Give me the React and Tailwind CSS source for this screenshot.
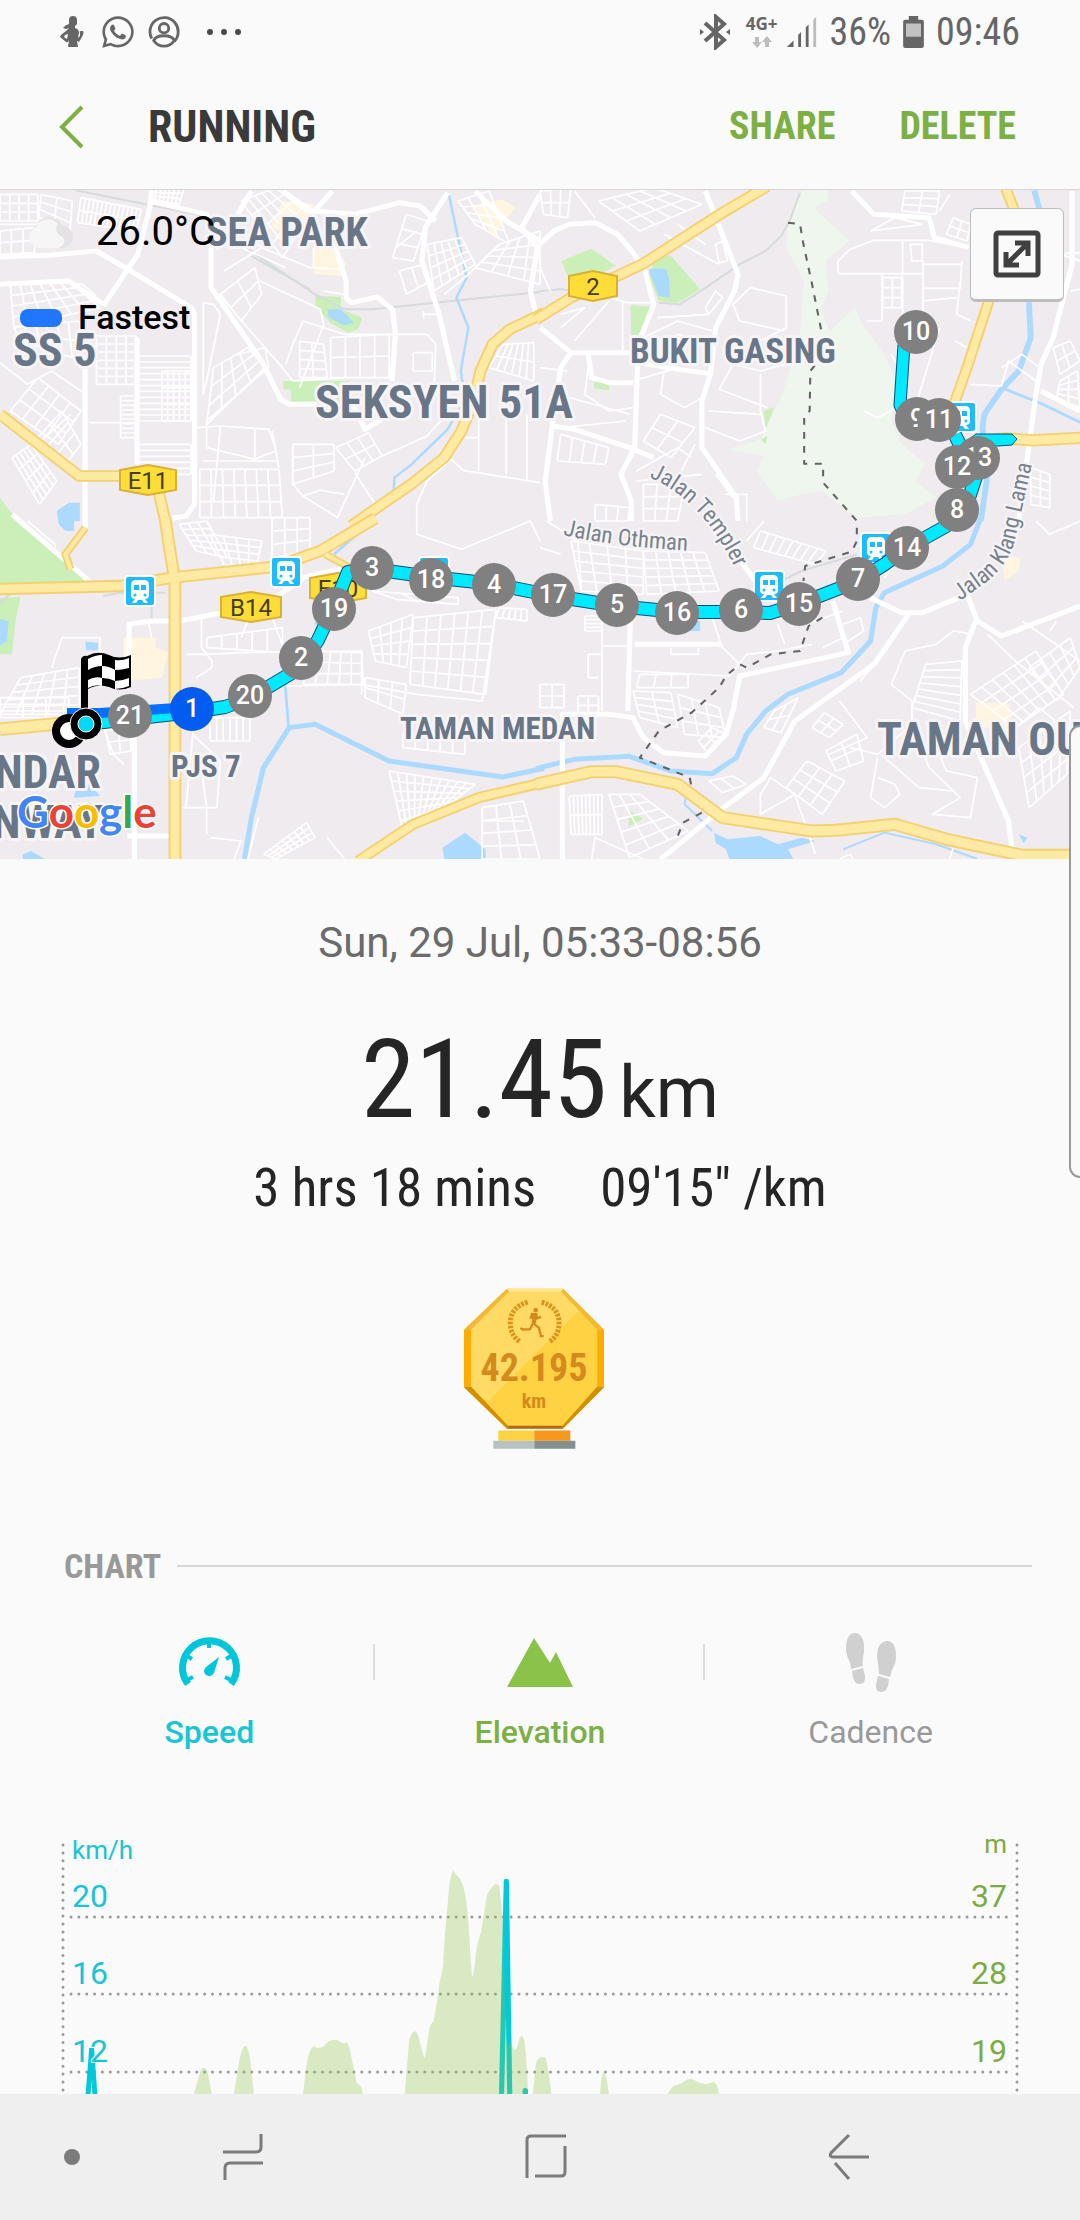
import React, { useState } from "react";
import { FaWhatsapp } from "react-icons/fa";

const condensed = "font-['Roboto_Condensed','Liberation_Sans_Narrow',Roboto,sans-serif]";

// Each tile is drawn in its own unit space and placed on the map canvas
const TILES = [
  {
    at: "translate(0 -9) scale(.3444 .3333)",
    commercial: [
      "M820 60L912 70L900 110L860 160L785 140Z",
      "M912 190L975 195L1005 250L990 285L912 278Z",
      "M1365 75L1460 55L1495 80L1435 165Z",
    ],
    parks: [
      "M916 344L990 348V385L1052 410L1040 445L1010 455L960 425L916 375Z",
      "M822 600H1015V662H845V625H822Z",
      "M0 950L50 1020H0Z",
    ],
    forest: [],
    lakes: ["M950 385H990L1028 425L1000 433L955 410Z", "M165 990L200 965H232V1020H170Z"],
    rivers: [
      ["M1303 40L1355 290L1325 350L1360 440L1338 570L1345 620M1335 680L1300 745L1195 850L1145 890L1143 935", 7],
    ],
    rail: ["M220 28L595 105L735 215L915 340L1000 385H1080L1568 333", "M730 225L900 325"],
    blocks: [
      [0, 40, 110, 40, 110, 120, 0, 120, 4, 3],
      [120, 40, 210, 60, 200, 190, 110, 130, 2, 4],
      [235, 50, 410, 85, 395, 150, 225, 125, 14, 2],
      [0, 150, 100, 140, 100, 215, 0, 220, 3, 2],
      [440, 20, 535, 20, 520, 70, 440, 55, 7, 3],
      [30, 310, 200, 300, 290, 380, 40, 440, 6, 4],
      [40, 440, 230, 420, 240, 540, 60, 480, 6, 2],
      [280, 465, 395, 465, 395, 610, 280, 610, 4, 6],
      [400, 525, 555, 525, 555, 720, 400, 720, 1, 11],
      [470, 570, 555, 570, 555, 720, 470, 720, 5, 3],
      [350, 645, 395, 645, 395, 770, 350, 770, 1, 9],
      [400, 790, 555, 790, 555, 880, 400, 880, 1, 5],
      [580, 865, 810, 865, 820, 1010, 580, 1010, 7, 3],
      [30, 690, 110, 590, 235, 690, 170, 790, 3, 4],
      [35, 830, 90, 790, 165, 900, 115, 970, 5, 4],
      [110, 770, 180, 690, 235, 790, 190, 850, 2, 3],
      [850, 790, 970, 790, 970, 870, 850, 910, 2, 3],
      [975, 800, 1070, 755, 1110, 825, 1030, 870, 3, 2],
      [870, 480, 940, 490, 950, 590, 870, 590, 2, 4],
      [960, 470, 1130, 460, 1130, 590, 960, 590, 4, 2],
      [1200, 515, 1255, 515, 1255, 570, 1200, 570, 1, 1],
      [1240, 190, 1340, 170, 1380, 250, 1260, 330, 5, 4],
      [1380, 260, 1450, 190, 1568, 150, 1568, 310, 4, 4],
      [1420, 560, 1460, 490, 1550, 485, 1550, 600, 2, 6],
      [620, 560, 720, 500, 770, 560, 600, 730, 4, 3],
      [640, 340, 740, 260, 760, 340, 700, 420, 2, 2],
      [700, 60, 800, 20, 900, 100, 820, 230, 5, 4],
      [1180, 100, 1240, 120, 1200, 240, 1140, 230, 1, 3],
      [1180, 340, 1250, 300, 1230, 250, 1160, 270, 2, 1],
      [1330, 60, 1420, 30, 1480, 190, 1380, 130, 3, 4],
    ],
    minor: [
      "M590 365L620 370L640 400L600 600L590 640Z M690 520L770 500L780 560L600 720V800L740 835",
      "M635 340L820 560L850 600L1000 590M755 300L930 385L940 430L870 620",
      "M570 740L640 735L780 745L800 800V810L740 835M640 735L620 960M790 750L810 860",
      "M830 550L850 490L880 420L1000 460H1240L1265 490L1260 640L1140 650",
      "M850 800V910L880 945L980 1010L1060 830M880 945L930 928L1000 940M1030 875L1090 970M1110 825L1240 765L1270 730L1300 700",
      "M1210 1020V970L1240 900L1310 835L1345 868L1568 905M1390 640V870M1470 680V880M1530 700V900M1350 770H1390",
      "M0 545L80 610L150 570L250 640M260 725H400M205 700L120 780M0 130H110M150 300L240 310L280 345",
      "M620 100L760 200L900 260L1000 265M700 200L830 260M650 270L760 200M910 200V260M940 330L1000 340",
      "M1150 200L1210 150M1290 340L1360 280L1450 190M1230 400H1270M1230 390V415M590 840H810M740 740V840",
    ],
    major: [
      "M0 228L150 222L280 210L330 240L380 270L555 380L565 400V970L540 1005L500 1012",
      "M440 30L435 80L400 220L370 265L300 375M435 60L600 100L620 140",
      "M613 190V320L760 540L815 655L840 670H920",
      "M247 555V1020M398 470V850",
      "M1300 35L1235 140L1225 240L1275 400L1320 600",
      "M970 190L1005 300V350L1020 365L1095 348L1140 385L1148 460L1138 600",
      "M730 30L640 190M820 30L905 90L1030 100L1160 65L1220 75L1265 120M905 100L965 30",
      "M1380 30L1470 120L1568 180M1568 40L1515 140L1560 200L1540 330L1555 395",
      "M1000 620L1060 745L1130 700M0 310L200 300L300 370",
    ],
    highways: [
      ["M1580 396L1480 445L1430 490L1395 570L1375 660L1340 750L1290 830L1200 905L1020 1034", 24],
      ["M0 700L230 885H360M460 930L480 1020", 24],
    ],
    borders: [],
  },
  {
    at: "translate(540 -9) scale(.3444 .3333)",
    commercial: [],
    parks: [
      "M62 240L150 203L220 255L150 290L80 285Z",
      "M335 235L378 222L465 325L400 365L345 360L315 280Z",
      "M263 372L322 378L280 475L265 470Z",
      "M157 602L203 605L200 628L157 622Z",
      "M650 690L680 678L655 745Z",
      "M640 775L662 765L655 790Z",
    ],
    forest: [
      "M760 28H835V60L795 80L898 180L830 240L837 330L815 380L840 450L915 380L935 430L1000 520L1030 590V640L1020 720L1050 790L1120 850L1090 900L1150 950L1060 1000L920 1010L820 930L760 940L690 960L630 870L650 825L545 805L640 775L700 650L755 470L765 300L715 200L720 120L750 60Z",
    ],
    lakes: ["M315 265L365 262L375 290L378 350L345 345Z"],
    rivers: [
      ["M1435 28L1450 85L1440 230L1420 370L1425 470L1390 570L1340 625L1290 700L1285 740L1297 900L1280 1020", 17],
      ["M1340 620L1460 670L1580 730", 8],
    ],
    rail: ["M755 35L725 120L700 165L655 210L580 250L460 335L405 370L345 365M0 330L60 325L100 330"],
    blocks: [
      [0, 30, 90, 20, 80, 110, 10, 100, 3, 2],
      [170, 60, 330, 20, 470, 70, 290, 150, 4, 3],
      [995, 290, 1050, 290, 1050, 380, 995, 380, 2, 3],
      [1060, 30, 1160, 30, 1150, 100, 1050, 90, 2, 3],
      [1180, 160, 1200, 110, 1250, 130, 1240, 180, 2, 2],
      [1510, 600, 1560, 570, 1568, 680, 1500, 650, 2, 4],
      [1425, 860, 1480, 880, 1480, 980, 1425, 970, 2, 4],
      [60, 760, 200, 800, 190, 850, 50, 840, 4, 1],
      [300, 780, 350, 700, 450, 740, 380, 830, 2, 2],
      [160, 970, 260, 980, 255, 1020, 160, 1020, 3, 1],
      [300, 910, 420, 910, 400, 1020, 300, 1020, 3, 3],
      [1490, 500, 1540, 480, 1568, 540, 1510, 580, 2, 2],
    ],
    minor: [
      "M865 275V240L900 205L970 178H1130L1240 200M865 278H1110M1053 180V440M1112 240V420M993 280V420H950M1075 190H1110V240H1080Z",
      "M1110 322H1220L1225 240M1110 250H1225M1095 660L1160 440M1110 360L1210 350M1220 300L1210 400L1250 420M1205 480L1240 500",
      "M610 320L715 345V440L640 480M610 320L560 370L580 420L710 450M480 380L510 330L530 350L490 400Z",
      "M520 625L560 550L640 570L750 540M520 625L660 680M640 580V690L655 750L580 780L480 740M490 690L640 700",
      "M940 690L980 710L1045 675M1020 520L1060 590M1250 610L1340 615L1360 540L1440 600",
      "M180 340L250 365H330M60 440L130 380L60 400M200 360L100 480M240 360V520",
      "M140 560L130 640L200 690L270 680M50 640L260 700M60 740L250 720M270 600L400 560M360 570L350 640L420 680L470 650",
      "M360 160L520 250M400 130L480 190M510 190L530 180L545 240L520 245ZM340 410L490 400M300 470L400 420L500 450M350 500L400 460L480 480",
      "M280 870L400 800L440 830M280 900L470 880M540 940L600 940V1020M510 880L560 950M410 870L450 790",
      "M960 150L1030 110L1110 130L960 150M1160 90L1190 40M1340 560L1400 520L1450 560",
      "M0 560L80 570M100 30L160 110M0 260L30 330M1400 180L1568 240M1480 220L1568 215M1540 330L1568 325",
    ],
    major: [
      "M0 190L40 150L85 130L160 125L225 160L270 215L305 270L330 370L285 490L275 800L235 880L265 960V1020",
      "M480 30L575 280L565 330L510 440L495 580L470 660V800L570 950L575 1020",
      "M0 440L90 515H260M285 545L400 565L495 578M90 515L60 560L35 740L15 900L30 1020",
      "M35 735L100 745L260 800L330 830M140 520L150 590L200 605H270",
      "M905 30L970 100L1130 110L1145 170L1245 200",
      "M1545 30V250L1490 470L1455 550L1440 640L1390 1020M1455 630L1568 690",
    ],
    highways: [
      ["M-12 416L90 350L300 248L530 95L660 16", 24],
      ["M1350 16L1378 90L1330 250L1303 360L1240 560L1195 690", 22],
      ["M1250 785L1350 772L1430 778L1580 770", 26],
    ],
    borders: ["M720 125L755 130L765 190L790 310L818 455", "M798 553L785 570L783 690L767 710V848H822V905L920 1020"],
  },
  {
    at: "translate(0 331) scale(.3444 .3333)",
    commercial: ["M358 350H452V380L490 392L470 470L358 480Z"],
    parks: ["M0 -40L20 -35L65 0L250 178L200 190H0Z", "M0 230L60 228L45 300L35 400L0 400Z"],
    forest: [],
    lakes: [
      "M0 295L25 300L20 360L0 372Z",
      "M170 -20H215V30H190L170 10Z",
      "M248 362L285 365V388H250Z",
      "M1285 980L1350 935L1410 985V1014H1290Z",
      "M230 745L290 825L215 830Z",
      "M66 1000L90 990L130 1014H66Z",
    ],
    rivers: [
      ["M915 310L940 290M828 490L838 620M1080 0L970 100", 8],
      ["M710 1014L730 890L765 740L840 620L915 610L1130 720L1460 768L1580 742", 15],
    ],
    rail: ["M300 225L350 215H480M440 215V300M0 245L40 210"],
    blocks: [
      [520, 10, 600, 0, 660, 110, 570, 90, 3, 5],
      [610, 40, 760, 60, 745, 140, 650, 130, 4, 4],
      [790, -10, 900, -10, 900, 90, 790, 110, 3, 3],
      [600, 350, 820, 320, 820, 395, 600, 380, 5, 1],
      [900, 390, 1050, 395, 1055, 490, 880, 490, 5, 3],
      [60, 470, 230, 440, 230, 580, 0, 580, 5, 5],
      [1070, 330, 1200, 280, 1180, 440, 1090, 420, 4, 4],
      [1200, 290, 1440, 265, 1410, 520, 1190, 490, 6, 5],
      [1060, 470, 1180, 490, 1170, 580, 1060, 530, 3, 2],
      [1130, 750, 1380, 790, 1280, 870, 1170, 930, 10, 6],
      [765, 1000, 890, 905, 915, 950, 800, 1014, 7, 3],
      [1400, 860, 1520, 840, 1568, 1014, 1400, 1014, 3, 4],
      [1170, 640, 1350, 660, 1350, 700, 1170, 680, 5, 1],
      [610, 590, 725, 590, 725, 660, 610, 660, 6, 1],
      [1080, 210, 1330, 230, 1330, 250, 1150, 235, 3, 1],
      [300, 590, 380, 590, 380, 690, 320, 700, 2, 3],
      [0, 530, 200, 530, 200, 590, 0, 590, 3, 3],
      [1450, 260, 1530, 265, 1530, 300, 1440, 290, 5, 1],
    ],
    minor: [
      "M1210 0V40L1340 85L1540 0L1568 60M585 290V380L615 420V440L570 470M700 350L720 300L790 290L830 400",
      "M540 400H600L700 395L1050 390V520M830 495L1050 490L1210 520L1400 540L1440 270",
      "M150 440L180 350H290V500M360 730L330 700L300 620M500 500L560 510V640L540 860",
      "M560 640L640 720L630 860H530M600 860V940M610 950L700 960L680 1014M580 700L600 860M950 950L1000 1014",
      "M80 0L160 70V95M720 1014L750 890M430 300L440 350M300 560V600M1410 900H1520",
    ],
    major: [
      "M35 -20L270 190M375 480V310L440 300L520 300L700 265L800 230L880 170L1000 140",
      "M390 620V1014M370 945H490M247 -20V20",
    ],
    highways: [
      ["M500 570L250 600L0 625", 30],
      ["M0 204L350 195L500 170L800 137L930 90L1090 -8", 26],
      ["M945 100L1015 140M248 20L190 100L205 145", 12],
      ["M479 -10L495 100L508 180V1014", 26],
      ["M1040 1020L1200 910L1390 830L1580 784", 22],
    ],
    borders: [],
  },
  {
    at: "translate(540 331) scale(.3444 .3333)",
    commercial: ["M1265 545L1360 545L1375 620H1265Z", "M1335 100L1395 110L1390 150L1350 178Z"],
    parks: ["M258 868L300 893L258 918Z"],
    forest: [],
    lakes: [
      "M505 935L545 955L640 945L690 970L760 950L800 960L720 985L735 1014H550L540 985L510 965Z",
      "M1390 940L1415 950L1405 967Z",
      "M430 330L440 300H465V330Z",
    ],
    rivers: [
      ["M1280 -10L1250 70L1170 135L1000 215L975 260L960 360L875 455L720 520L655 570L600 640L570 710L500 758L380 750L260 706L100 715L-10 742", 15],
      ["M430 790L420 850L500 930M880 985L1000 935L1150 970L1270 1014", 6],
    ],
    rail: ["M680 190L760 150L920 100"],
    blocks: [
      [90, 60, 300, 90, 300, 220, 120, 210, 4, 5],
      [300, 90, 480, 95, 520, 210, 310, 220, 5, 5],
      [640, 30, 830, 90, 800, 130, 620, 80, 8, 1],
      [130, 285, 180, 285, 180, 330, 130, 330, 1, 4],
      [290, 460, 430, 460, 430, 500, 280, 500, 3, 1],
      [270, 510, 380, 515, 400, 620, 290, 590, 2, 4],
      [400, 520, 520, 560, 540, 650, 420, 640, 3, 3],
      [460, 660, 500, 620, 540, 640, 490, 700, 2, 2],
      [85, 825, 180, 820, 180, 940, 90, 940, 8, 2],
      [200, 820, 290, 820, 430, 930, 260, 1010, 3, 5],
      [1120, 430, 1225, 420, 1220, 600, 1080, 560, 1, 7],
      [1250, 520, 1440, 390, 1520, 520, 1380, 620, 6, 4],
      [1420, 440, 1540, 350, 1568, 440, 1500, 540, 4, 3],
      [1390, 680, 1540, 570, 1530, 760, 1420, 860, 5, 4],
      [715, 800, 775, 720, 885, 780, 820, 880, 3, 3],
      [830, 690, 920, 640, 940, 720, 860, 750, 2, 2],
      [790, 620, 825, 575, 880, 610, 840, 650, 2, 2],
      [650, 620, 680, 570, 750, 530, 700, 635, 2, 2],
      [0, 490, 70, 490, 70, 560, 0, 560, 2, 2],
      [110, 525, 170, 525, 170, 580, 110, 580, 2, 2],
      [490, 780, 560, 765, 600, 790, 530, 815, 2, 1],
    ],
    minor: [
      "M180 300V570M140 400H180M140 400V470H170M180 375H260M0 80L60 100M20 0L110 60L120 200",
      "M270 450L550 465L600 400L690 390L790 370M500 290L530 380L590 440M380 380V400H460V380",
      "M870 540L950 650L840 700M640 820L670 770L740 820L640 880ZM740 820L800 1000",
      "M1060 390L1020 490L1080 540V610L980 700L900 680M1060 390L1150 370L1200 330L1260 340",
      "M980 710L960 830L1000 860L1045 820L1030 790L980 770M1080 610L1130 740L1220 830L1140 880L1250 890",
      "M990 700L1100 800L1200 810M1120 600L1180 750L1270 770L1250 890M880 310L930 290L940 330L880 370M820 380L880 350",
      "M930 480L970 430M1380 620L1450 560L1540 640M1440 0L1480 40L1568 0M600 60L650 0M1000 170L1090 40L1200 30",
      "M1300 340L1380 420L1550 560M1400 300L1568 420M1480 330L1500 300M650 290L800 300L880 270",
      "M150 1014L160 950L300 1014M870 1014L900 1000L910 1014M690 310L710 370M1200 980L1190 1014",
    ],
    major: [
      "M490 -10L545 60L590 130L625 180M850 240L895 395L580 465L560 570L540 640L480 705L360 695L300 650L270 590L200 580H65V750M65 790V1014",
      "M262 300L255 570M275 370H525M960 230L1050 275L1110 275L1240 220L1270 300L1340 345L1568 255",
      "M1070 280L970 430L740 600L650 770L520 870L380 990L350 1014",
      "M1265 300L1235 380V600L1360 900L1370 980",
    ],
    highways: [["M-12 790L150 752L220 752L400 790L530 890L790 930L860 928L1030 910L1180 955L1400 1003H1580", 28]],
    borders: [
      "M920 20V60L905 92L770 135L765 180",
      "M820 290L780 315L755 390L670 400L600 440L580 430L540 465L520 500L440 575L345 630L290 710L435 770L440 800",
      "M470 875L415 905L400 945",
    ],
  },
];

// Street grid stretched over a four-cornered block
const blockPath = ([ax, ay, bx, by, cx, cy, dx, dy, cols, rows]) => {
  const mix = (a, b, t) => Math.round(a + (b - a) * t);
  let d = "";
  for (let i = 0; i <= cols; i++) {
    const t = i / cols;
    d += `M${mix(ax, bx, t)} ${mix(ay, by, t)}L${mix(dx, cx, t)} ${mix(dy, cy, t)}`;
  }
  for (let j = 0; j <= rows; j++) {
    const t = j / rows;
    d += `M${mix(ax, dx, t)} ${mix(ay, dy, t)}L${mix(bx, cx, t)} ${mix(by, cy, t)}`;
  }
  return d;
};

const PLACES = [
  { name: "SEA PARK", x: 206, y: 56, size: 40 },
  { name: "SS 5", x: 13, y: 176, size: 46 },
  { name: "SEKSYEN 51A", x: 315, y: 228, size: 46 },
  { name: "BUKIT GASING", x: 630, y: 173, size: 35 },
  { name: "TAMAN MEDAN", x: 400, y: 549, size: 31 },
  { name: "PJS 7", x: 171, y: 587, size: 31 },
  { name: "TAMAN OU", x: 877, y: 565, size: 46 },
  { name: "NDAR", x: 101, y: 598, size: 46, anchor: "end" },
  { name: "NWAY", x: 103, y: 648, size: 46, anchor: "end" },
];

const SHIELDS = [
  { name: "2", x: 593, y: 96, w: 48 },
  { name: "E11", x: 148, y: 290, w: 56 },
  { name: "E10", x: 338, y: 398, w: 56 },
  { name: "B14", x: 251, y: 417, w: 60 },
];

const STATIONS = [
  [140, 401],
  [286, 382],
  [434, 382],
  [769, 396],
  [876, 358],
  [961, 227],
];

const SPLITS = [
  [10, 916, 142],
  [9, 917, 229],
  [11, 939, 230],
  [13, 978, 268],
  [8, 957, 320],
  [12, 957, 277],
  [14, 907, 358],
  [7, 858, 389],
  [15, 799, 414],
  [6, 741, 420],
  [16, 677, 423],
  [5, 617, 415],
  [17, 553, 405],
  [4, 494, 395],
  [18, 431, 390],
  [3, 372, 378],
  [19, 334, 419],
  [2, 301, 468],
  [20, 250, 506],
  [21, 130, 526],
  [1, 192, 519],
];

const ROUTE =
  "M86 534L130 529L192 522L225 517L250 508L300 478L318 450L334 416L348 382L372 379L431 387L494 394L553 406L617 416L677 422L741 422L770 423L799 414L858 391L885 374L907 358L957 330L970 305L978 280L960 255L955 245";

function RouteMap() {
  return (
    <svg viewBox="0 0 1080 669" className="block h-auto w-full bg-[#efebef]" role="img" aria-label="Route map">
      <g fill="none" strokeLinejoin="round">
        {TILES.map((t) => (
          <g key={t.at} transform={t.at} stroke="none">
            {t.commercial.map((d) => <path key={d} d={d} fill="#fff5e0" />)}
            {t.forest.map((d) => <path key={d} d={d} fill="#eef6ee" />)}
            {t.parks.map((d) => <path key={d} d={d} fill="#caefb9" />)}
            {t.lakes.map((d) => <path key={d} d={d} fill="#acdaff" />)}
          </g>
        ))}
        {TILES.map((t) => (
          <g key={t.at} transform={t.at}>
            {t.rail.map((d) => <path key={d} d={d} stroke="#d6dbdc" strokeWidth="6" />)}
            {t.rivers.map(([d, w]) => <path key={d} d={d} stroke="#acdaff" strokeWidth={w} />)}
            <g stroke="#fff" strokeWidth="5">
              {t.blocks.map((b) => <path key={b.join()} d={blockPath(b)} />)}
              {t.minor.map((d) => <path key={d} d={d} />)}
            </g>
            {t.major.map((d) => <path key={d} d={d} stroke="#fff" strokeWidth="15" />)}
          </g>
        ))}
        {TILES.map((t) => (
          <g key={t.at} transform={t.at}>
            {t.highways.map(([d, w]) => <path key={d} d={d} stroke="#f5d070" strokeWidth={w + 11} />)}
            {t.highways.map(([d, w]) => <path key={d + w} d={d} stroke="#feeaa3" strokeWidth={w} />)}
            {t.borders.map((d) => (
              <path key={d} d={d} stroke="#636363" strokeWidth="6" strokeDasharray="20 22" />
            ))}
          </g>
        ))}
      </g>

      {SHIELDS.map(({ name, x, y, w }) => (
        <g key={name}>
          <path
            d={`M${x - w / 2} ${y - 10}L${x} ${y - 15}L${x + w / 2} ${y - 10}V${y + 10}L${x} ${y + 15}L${x - w / 2} ${y + 10}Z`}
            fill="#ffdd39"
            stroke="#d9b036"
            strokeWidth="2"
          />
          <text x={x} y={y + 9} textAnchor="middle" className="font-[Roboto,sans-serif] text-[24px]" fill="#45401f">
            {name}
          </text>
        </g>
      ))}

      <g className={`font-bold ${condensed}`} fill="#697687" stroke="#f6f4f6" strokeWidth="6" paintOrder="stroke" strokeLinejoin="round">
        {PLACES.map((p) => (
          <text key={p.name} x={p.x} y={p.y} fontSize={p.size} textAnchor={p.anchor}>
            {p.name}
          </text>
        ))}
      </g>

      <path id="othman" d="M563 345Q620 358 700 361" fill="none" />
      <path id="templer" d="M649 287Q706 312 738 385" fill="none" />
      <path id="klang" d="M960 411L988 391Q1012 370 1016 345L1042 230" fill="none" />
      <g className={`text-[23px] ${condensed}`} fill="#78828e" stroke="#f6f4f6" strokeWidth="4" paintOrder="stroke">
        <text><textPath href="#othman">Jalan Othman</textPath></text>
        <text><textPath href="#templer">Jalan Templer</textPath></text>
        <text><textPath href="#klang">Jalan Klang Lama</textPath></text>
      </g>

      {STATIONS.map(([x, y]) => (
        <g key={x} transform={`translate(${x - 15} ${y - 15})`}>
          <rect x="0" y="0" width="30" height="30" rx="3" fill="#1cbcff" stroke="#fff" strokeWidth="2" />
          <path
            d="M11 4H19Q24 4 24 9V19Q24 23 20 23L23 27H19L17 24H13L11 27H7L10 23Q6 23 6 19V9Q6 4 11 4Z"
            fill="#fff"
          />
          <path d="M9 9H14V14H9ZM16 9H21V14H16Z" fill="#1cbcff" />
          <circle cx="10" cy="19" r="1.5" fill="#1cbcff" />
          <circle cx="20" cy="19" r="1.5" fill="#1cbcff" />
        </g>
      ))}

      <g fill="none" strokeLinejoin="round">
        <path d={ROUTE} stroke="#0b4f78" strokeWidth="14" />
        <path d="M904 155L900 215L908 232" stroke="#0b4f78" strokeWidth="13" />
        <path d={ROUTE} stroke="#00e9ff" strokeWidth="12" />
        <path d="M904 155L900 215L908 232" stroke="#00e9ff" strokeWidth="11" />
        <path d="M960 256L976 244H1012L1017 249L1012 255L970 258Z" fill="#00e9ff" stroke="#0b4f78" strokeWidth="1" />
        <path d="M67 523L100 523L192 517" stroke="#0072ff" strokeWidth="10" />
      </g>

      {SPLITS.map(([km, x, y]) => (
        <g key={km}>
          <circle cx={x} cy={y} r="22" fill={km === 1 ? "#035cf0" : "#808080"} />
          <text x={x} y={y + 8} textAnchor="middle" className="font-[Roboto,sans-serif] text-[25px] font-medium" fill="#fff">
            {km}
          </text>
        </g>
      ))}

      {/* start ring and finish flag */}
      <circle cx="69" cy="541" r="13" fill="#fff" stroke="#000" strokeWidth="8" />
      <path d="M81 469Q83 465 87 466Q98 460 109 465Q119 470 131 465V497Q119 502 109 497Q98 493 88 499V520H81Z" fill="#000" />
      <path
        d="M88 469Q95 465 102 465V476Q95 476 88 480ZM102 476Q109 476 115 480V491Q109 488 102 488ZM115 470Q122 471 129 468V478Q122 480 115 480ZM88 490Q95 486 102 488V496Q95 494 88 498ZM115 491Q122 491 129 488V496Q122 499 115 499Z"
        fill="#fff"
      />
      <circle cx="86" cy="534" r="16" fill="#000" stroke="#fff" strokeWidth="1" />
      <circle cx="86" cy="534" r="8" fill="#00d9f5" stroke="#fff" strokeWidth="1" />

      <text x="17" y="638" className="font-[Lato,sans-serif] text-[44px] font-bold" stroke="#fff" strokeWidth="3" paintOrder="stroke">
        <tspan fill="#4285f4">G</tspan>
        <tspan fill="#ea4335">o</tspan>
        <tspan fill="#fbbc05">o</tspan>
        <tspan fill="#4285f4">g</tspan>
        <tspan fill="#34a853">l</tspan>
        <tspan fill="#ea4335">e</tspan>
      </text>
    </svg>
  );
}

function StatusBar() {
  return (
    <div className={`flex h-15 items-center justify-between px-15 pt-1 text-[#666] ${condensed}`}>
      <div className="flex items-center">
        <svg viewBox="0 0 24 32" className="h-8 w-6" fill="currentColor">
          <path d="M9 4Q9 0 13 0Q17 0 17 4V8L15 10V12Q19 13 19 17L18 22L20 20V17Q19 15 21 15H23Q24 16 23 19L19 26L17 25L18 31H8L9 24Q8 27 6 26L0 21Q0 19 6 15L9 12L6 13L3 12Q5 9 9 8Z" />
          <path d="M5 19L4 21L7 23L8 18Z" fill="#fafafa" />
        </svg>
        <FaWhatsapp className="ml-4 size-9" />
        <svg viewBox="0 0 34 34" className="ml-3 size-8" fill="none" stroke="currentColor" strokeWidth="3">
          <path d="M4 24A15 15 0 1 1 28 27" />
          <circle cx="17" cy="13" r="5" />
          <path d="M6 26Q8 21 17 21Q26 21 28 26Q24 32 17 32Q10 32 6 26Z" />
        </svg>
        <svg viewBox="0 0 36 8" className="ml-6.5 h-2 w-9" fill="#4a4a4a">
          <circle cx="4" cy="4" r="3" />
          <circle cx="18" cy="4" r="3" />
          <circle cx="32" cy="4" r="3" />
        </svg>
      </div>
      <div className="flex items-center text-[38px] leading-none">
        <svg viewBox="0 0 30 34" className="h-9 w-7.5" fill="none" stroke="currentColor" strokeWidth="4">
          <path d="M5 8L24 25L16 32V2L24 9L5 26" />
          <path d="M0 14L4 17L0 20ZM30 14L26 17L30 20Z" fill="currentColor" stroke="none" />
        </svg>
        <div className="ml-4 flex flex-col items-center gap-1">
          <span className="font-['Open_Sans',sans-serif] text-[17px] leading-4 font-bold">4G+</span>
          <svg viewBox="0 0 20 12" className="h-3 w-5" fill="#bdbdbd">
            <path d="M3 1H7V6H10L5 12L0 6H3ZM13 11H17V6H20L15 0L10 6H13Z" />
          </svg>
        </div>
        <svg viewBox="0 0 32 34" className="ml-2 h-8 w-8" fill="currentColor">
          <path d="M0 33L7 26V33ZM12 20L15 17V33H12ZM20 12L23 9V33H20Z" />
          <path d="M28 4L31 1V33H28Z" fill="#bdbdbd" />
        </svg>
        <span className="ml-3">36%</span>
        <svg viewBox="0 0 22 34" className="ml-3 h-8 w-[21px]">
          <path d="M6 0H16V4H20Q22 4 22 6V32Q22 34 20 34H2Q0 34 0 32V6Q0 4 2 4H6Z" fill="#666" />
          <path d="M3 8H19V22H3Z" fill="#c2c2c2" />
        </svg>
        <span className="ml-3">09:46</span>
      </div>
    </div>
  );
}

function Badge() {
  return (
    <svg viewBox="133 85 420 485" className="h-[162px] w-[140px]">
      <path d="M262 87H430L553 210V382L430 507H262L133 382V210Z" fill="#ffd243" />
      <path d="M262 87H430L480 137L480 150L205 425L133 382V210Z" fill="#ffdb66" />
      <path d="M262 87L133 210L154 210L268 95ZM430 87L553 210H533L424 95Z" fill="#f4b932" />
      <path d="M262 87H430L424 95H268Z" fill="#ffe794" />
      <path d="M133 210H154V380L133 382ZM553 210H533V380L553 382Z" fill="#ffab00" />
      <path d="M133 382L154 380L265 498L262 507ZM553 382L533 380L428 498L430 507Z" fill="#d09000" />
      <path d="M265 498H428L430 507H262Z" fill="#b06a10" />
      <g fill="none" stroke="#d9951f" strokeWidth="15" strokeDasharray="8 4">
        <path d="M324 127Q272 142 272 190Q272 226 300 245" />
        <path d="M366 127Q418 142 418 190Q418 226 390 245" />
      </g>
      <g fill="none" stroke="#d48a1c" strokeWidth="7" strokeLinejoin="round">
        <path d="M332 177L337 162L350 163L352 176L364 171" />
        <path d="M346 160L340 190L358 204L364 229H372M340 190L331 208L308 209L303 204" />
        <path d="M344 165L343 190" strokeWidth="13" />
      </g>
      <circle cx="348" cy="151" r="7" fill="#d48a1c" />
      <g className={`font-bold ${condensed}`} fill="#d48a1c" textAnchor="middle">
        <text x="343" y="364" fontSize="114">42.195</text>
        <text x="343" y="444" fontSize="60">km</text>
      </g>
      <path d="M236 512H344V543H236Z" fill="#ffd243" />
      <path d="M344 512H452V543H344Z" fill="#f7981d" />
      <path d="M221 543H344V567H221Z" fill="#b6c2c1" />
      <path d="M344 543H467V567H344Z" fill="#828f8d" />
    </svg>
  );
}

const SpeedIcon = () => (
  <svg viewBox="0 0 64 60" className="h-15 w-16" fill="none" stroke="#00c6db">
    <path d="M11 52A27 27 0 1 1 54 52" strokeWidth="7" />
    <path d="M32 8V16M10 24L15 27M54 24L49 27M10 48L16 45M54 48L48 45" strokeWidth="4" />
    <path d="M42 25L37 41Q34 46 29 43Q25 39 29 35Z" fill="#00c6db" stroke="none" />
  </svg>
);

const ElevationIcon = () => (
  <svg viewBox="0 0 66 60" className="h-15 w-[66px]" fill="#8bc34a">
    <path d="M0 55L27 6L43 31L49 20L66 55Z" />
  </svg>
);

const CadenceIcon = () => (
  <svg viewBox="0 0 52 60" className="h-15 w-13" fill="#d0d0d0">
    <path d="M1 17Q1 1 10 1Q20 2 19 20Q17 30 18 34L6 37Q6 31 3 26Q1 22 1 17ZM7 39L18 36L20 44Q21 51 15 52Q10 52 8 46Z" />
    <path d="M51 25Q51 9 42 9Q32 10 32 25Q34 37 34 42L45 45Q46 39 49 34Q51 30 51 25ZM33 44L44 47L43 54Q41 60 36 60Q30 59 31 52Z" />
  </svg>
);

const TABS = [
  { id: "speed", label: "Speed", icon: SpeedIcon, style: "text-[#16c5d6] font-medium" },
  { id: "elevation", label: "Elevation", icon: ElevationIcon, style: "text-[#7cb043] font-medium" },
  { id: "cadence", label: "Cadence", icon: CadenceIcon, style: "text-[#999]" },
];

const GRID = [
  { y: 97, speed: "20", height: "37" },
  { y: 174, speed: "16", height: "28" },
  { y: 252, speed: "12", height: "19" },
];

const ELEVATION =
  "M447 822L466 752Q475 735 486 752L499 822ZM563 822L580 715Q597 640 610 715L621 822ZM764 822Q772 740 780 705Q790 672 800 681Q812 688 825 678Q835 662 850 660Q865 656 875 668Q885 672 892 667Q902 690 906 720L920 790Q935 795 938 822ZM1059 822L1072 660Q1080 632 1090 634Q1098 640 1103 668L1115 712H1118L1130 630Q1133 610 1142 605Q1150 570 1160 490L1170 440Q1176 330 1184 250Q1190 160 1200 152L1210 165Q1225 180 1230 205Q1240 240 1244 310L1254 470Q1258 475 1264 420Q1268 370 1280 340L1298 225Q1305 210 1314 200Q1325 182 1334 200L1344 300L1354 690Q1363 650 1372 680Q1382 705 1388 670Q1397 630 1406 660Q1412 690 1417 822ZM1431 822L1440 730Q1446 712 1456 712H1468Q1475 740 1485 822Z";

const ELEVATION_LATE = "M174 822L178 780Q184 735 194 780L200 822ZM371 822Q385 795 394 796Q405 796 415 786Q435 770 452 782Q465 792 480 792Q495 790 504 786Q514 786 520 822Z";

function Chart() {
  return (
    <svg viewBox="0 0 1080 274" className="block h-auto w-full" role="img" aria-label="Speed and elevation chart">
      <g fill="none" stroke="#9a9a9a" strokeWidth="3" strokeLinecap="round">
        <path d="M63 25V274M1017 25V274" strokeDasharray="0 7.9" />
        {GRID.map((g) => <path key={g.y} d={`M71 ${g.y}H1012`} strokeDasharray="0 7.86" />)}
      </g>
      <g transform="translate(40 0) scale(.3444 .3333)">
        <path d="M1354 184L1340 830M1354 184L1364 830" fill="none" stroke="#00c9dc" strokeWidth="15" strokeLinecap="round" />
        <path d="M1409 812V830" stroke="#00c9dc" strokeWidth="16" strokeLinecap="round" />
        <path d="M150 684L139 830M150 684L160 830" fill="none" stroke="#00c9dc" strokeWidth="14" />
        <path d={ELEVATION} fill="#8bc34a" fillOpacity=".3" />
      </g>
      <path d={ELEVATION_LATE} transform="translate(540 0) scale(.3444 .3333)" fill="#8bc34a" fillOpacity=".3" />
      <g className="font-[Roboto,sans-serif]" fontSize="32" stroke="#fafafa" strokeWidth="2" paintOrder="stroke">
        <text x="72" y="39" fontSize="26" fill="#16c5d6">km/h</text>
        <text x="1007" y="33" fontSize="26" fill="#7cab43" textAnchor="end">m</text>
        {GRID.map((g) => (
          <React.Fragment key={g.y}>
            <text x="72" y={g.y - 10} fill="#16c5d6">{g.speed}</text>
            <text x="1007" y={g.y - 10} fill="#7cab43" textAnchor="end">{g.height}</text>
          </React.Fragment>
        ))}
      </g>
    </svg>
  );
}

function NavBar() {
  return (
    <nav className="flex h-[126px] shrink-0 items-center bg-[#efefef] text-[#7b7b7b]">
      <button aria-label="Hide navigation bar" className="ml-16">
        <svg viewBox="0 0 16 16" className="size-4" fill="currentColor">
          <circle cx="8" cy="8" r="8" />
        </svg>
      </button>
      <div className="ml-[142px] flex flex-1 justify-between pr-[210px]">
        <button aria-label="Recent apps">
          <svg viewBox="0 0 42 48" className="h-12 w-[42px]" fill="none" stroke="currentColor" strokeWidth="3">
            <path d="M1 19H34Q39 19 39 14V1M41 30H8Q3 30 3 35V47" />
          </svg>
        </button>
        <button aria-label="Home">
          <svg viewBox="0 0 42 48" className="h-12 w-[42px]" fill="none" stroke="currentColor" strokeWidth="3">
            <path d="M2 45V7Q2 3 6 3H41M40 13V39Q40 43 36 43H10" />
          </svg>
        </button>
        <button aria-label="Back">
          <svg viewBox="0 0 42 48" className="h-12 w-[42px]" fill="none" stroke="currentColor" strokeWidth="3">
            <path d="M21 2L3 20Q1 24 5 24H41M7 30L21 46" />
          </svg>
        </button>
      </div>
    </nav>
  );
}

export default function App() {
  const [tab, setTab] = useState("speed");

  return (
    <div className={`relative flex min-h-screen flex-col overflow-hidden bg-[#fafafa] ${condensed}`}>
      <StatusBar />

      <header className="flex h-[129px] items-center pt-1 pr-16 pl-14 text-[38px] font-bold text-[#7cb043]">
        <button aria-label="Back">
          <svg viewBox="0 0 28 44" className="h-11 w-7" fill="none" stroke="currentColor" strokeWidth="4">
            <path d="M26 2L6 22L26 42" />
          </svg>
        </button>
        <h1 className="ml-16 flex-1 text-[44px] text-[#3a3a3a]">RUNNING</h1>
        <button>SHARE</button>
        <button className="ml-16">DELETE</button>
      </header>

      <section className="relative border-t border-[#d8d5d8]">
        <RouteMap />
        <div className="absolute top-3 left-6 flex items-center font-[Roboto,sans-serif] text-[40px] leading-[60px] text-black">
          <svg viewBox="0 0 52 36" className="mr-5 h-9 w-13">
            <path d="M14 34A12 12 0 0 1 12 12A14 14 0 0 1 38 12A11 11 0 0 1 38 34Z" fill="#e3e3e3" />
            <path d="M14 34A11 11 0 0 1 12 13A13 13 0 0 1 34 10Q28 18 40 24Q42 32 34 34Z" fill="#f6f6f6" />
          </svg>
          26.0°C
        </div>
        <div className="absolute top-[102px] left-5 flex items-center gap-4 font-[Roboto,sans-serif] text-[34px] font-medium text-black">
          <span className="h-[18px] w-[42px] rounded-lg bg-[#2176ff]" />
          Fastest
        </div>
        <button
          aria-label="Expand map"
          className="absolute top-[18px] right-4 flex h-[94px] w-[94px] items-center justify-center rounded-md border border-[#bdbdbd] border-b-3 bg-[#fafafa]"
        >
          <svg viewBox="0 0 48 48" className="size-12" fill="none" stroke="#404040" strokeWidth="5">
            <rect x="3" y="3" width="42" height="42" rx="2" />
            <path d="M14 34L34 14M22 13H35V26M13 22V35H26" strokeWidth="5" />
          </svg>
        </button>
      </section>

      <section className="flex flex-col items-center pt-14 text-[#252525]">
        <p className="font-[Roboto,sans-serif] text-[42px] leading-[56px] text-[#6b6b6b]">Sun, 29 Jul, 05:33-08:56</p>
        <p className="mt-[53px] flex items-baseline gap-3 text-[110px] leading-[112px]">
          21.45 <span className="font-[Roboto,sans-serif] text-[72px] leading-none">km</span>
        </p>
        <div className="mt-5 flex gap-16 text-[53px] leading-[64px]">
          <span>3 hrs 18 mins</span>
          <span>09'15" /km</span>
        </div>
        <div className="mt-17 pr-3">
          <Badge />
        </div>
      </section>

      <section className="mt-24">
        <div className="flex items-center gap-4 pr-12 pl-16">
          <h2 className="text-[34px] leading-10 font-bold text-[#999]">CHART</h2>
          <div className="h-0.5 flex-1 bg-[#d6d6d6]" />
        </div>
        <div className="mt-[46px] grid grid-cols-3 px-11">
          {TABS.map(({ id, label, icon: Icon, style }) => (
            <button
              key={id}
              aria-pressed={tab === id}
              onClick={() => setTab(id)}
              className="group relative flex flex-col items-center gap-5 font-[Roboto,sans-serif]"
            >
              <Icon />
              <span className={`text-[32px] leading-10 ${style}`}>{label}</span>
              <span className="absolute top-3 right-0 h-9 w-0.5 bg-[#ddd] group-last:hidden" />
            </button>
          ))}
        </div>
        <div className="mt-17">
          <Chart />
        </div>
      </section>

      <NavBar />

      {/* edge panel handle */}
      <div className="absolute top-[725px] right-0 h-[453px] w-[11px] rounded-l-xl border-y-2 border-l-2 border-[#999] bg-[#fafafa]" />
    </div>
  );
}
